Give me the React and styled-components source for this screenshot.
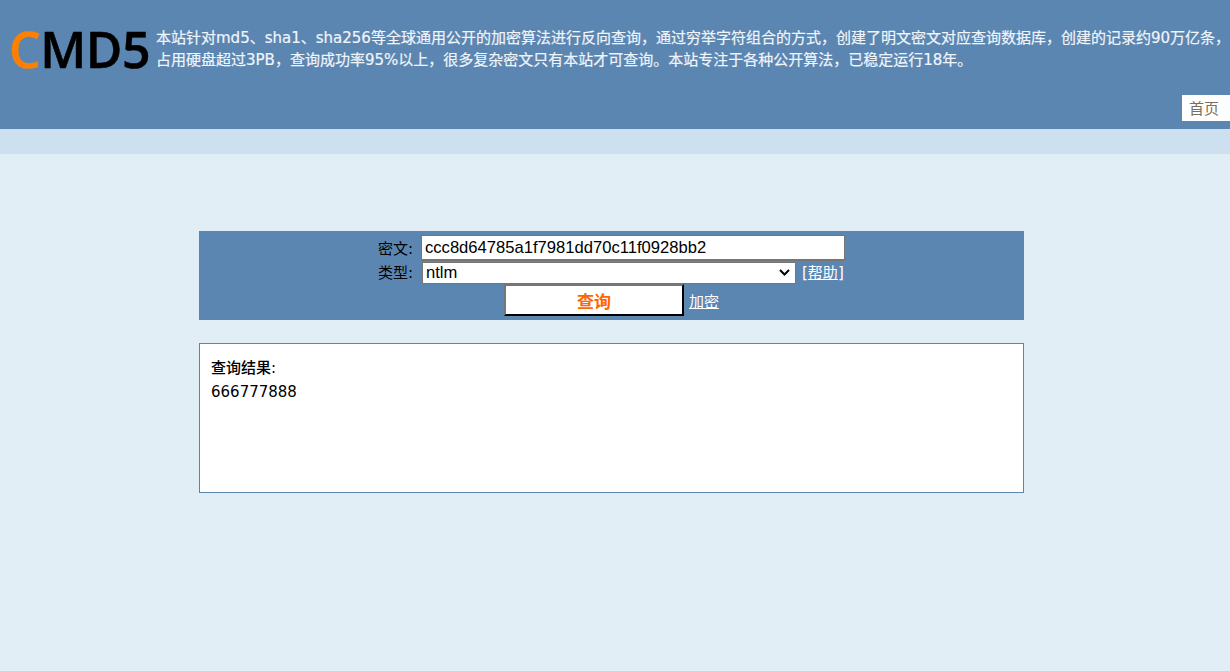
import React, { useState } from 'react'
import styled, { createGlobalStyle } from 'styled-components'

const GlobalStyle = createGlobalStyle`
  html, body {
    margin: 0;
    padding: 0;
    background: #e1eef6;
  }
  body {
    font-family: "DejaVu Sans", "Noto Sans CJK SC", sans-serif;
    font-size: 15px;
  }
`

const chevron = `url("data:image/svg+xml,%3Csvg xmlns='http://www.w3.org/2000/svg' width='11' height='7'%3E%3Cpath d='M1 1l4.5 4.5L10 1' fill='none' stroke='%23000' stroke-width='2'/%3E%3C/svg%3E")`

const Header = styled.header`
  height: 129px;
  background: #5c86b2;
  position: relative;
  display: flex;
  align-items: flex-start;
  box-sizing: border-box;
  padding: 27px 0 0 9px;
`

const Logo = styled.div`
  width: 147px;
  flex: none;
  font-family: "Open Sans", sans-serif;
  font-size: 50px;
  font-weight: 600;
  line-height: 44px;
  letter-spacing: -0.5px;
  color: #000;
  -webkit-text-stroke: 0.5px currentColor;
  white-space: nowrap;
`

const LogoC = styled.span`
  color: #ff8000;
`

const Intro = styled.p`
  margin: 0;
  font-size: 15px;
  line-height: 22px;
  color: #f0f5fa;
  -webkit-text-stroke: 0.2px #f0f5fa;
  white-space: nowrap;
`

const Nav = styled.a`
  position: absolute;
  right: 0;
  top: 95px;
  width: 48px;
  height: 26px;
  box-sizing: border-box;
  padding-left: 7px;
  background: #fff;
  color: #7a6e5c;
  font-size: 15px;
  line-height: 29px;
`

const SubBar = styled.div`
  height: 25px;
  background: #cce0ef;
`

const Main = styled.main`
  width: 825px;
  margin: 77px 0 0 199px;
`

const QueryForm = styled.form`
  height: 89px;
  box-sizing: border-box;
  padding-top: 4px;
  background: #5c86b2;
  display: flex;
  flex-direction: column;
  align-items: center;
`

const Row = styled.div`
  display: flex;
  align-items: center;
  height: ${p => p.$height}px;
`

const Label = styled.label`
  width: 43px;
  flex: none;
  padding-bottom: 2px;
  color: #000;
  font-size: 15px;
  white-space: nowrap;
`

const CipherInput = styled.input`
  width: 424px;
  height: 26px;
  box-sizing: border-box;
  margin: 0;
  padding: 0 3px;
  border: 1px solid #767676;
  border-bottom-width: 2px;
  background: #fff;
  color: #000;
  font-family: "Liberation Sans", sans-serif;
  font-size: 16.6px;
`

const TypeSelect = styled.select`
  appearance: none;
  width: 374px;
  height: 22px;
  box-sizing: border-box;
  margin: 0 6px 0 1px;
  padding: 0 3px;
  border: 1px solid #767676;
  background: #fff ${chevron} no-repeat right 5px center;
  color: #000;
  font-family: "Liberation Sans", sans-serif;
  font-size: 16.6px;
`

const Help = styled.span`
  width: 43px;
  padding-bottom: 2px;
  color: #fff;
  font-size: 15px;
  white-space: nowrap;
`

const LightLink = styled.a`
  color: #fff;
  font-size: 15px;
  text-decoration: underline;
  cursor: pointer;
`

const SubmitButton = styled.button`
  width: 180px;
  height: 32px;
  box-sizing: border-box;
  margin: 0 5px 0 0;
  padding: 0;
  border: 2px solid;
  border-color: #767676 #000 #000 #767676;
  background: #fff;
  color: #ff6600;
  font-family: "DejaVu Sans", "Noto Sans CJK SC", sans-serif;
  font-size: 17px;
  font-weight: bold;
`

const ResultBox = styled.section`
  height: 150px;
  box-sizing: border-box;
  margin-top: 23px;
  padding: 12px 11px 0;
  background: #fff;
  border: 1px solid #5c86b2;
  color: #000;
  font-size: 15px;
  line-height: 24px;
`

const ResultTitle = styled.div`
  font-weight: 500;
`

const App = () => {
  const [cipher, setCipher] = useState('ccc8d64785a1f7981dd70c11f0928bb2')
  const [type, setType] = useState('ntlm')

  return <>
    <GlobalStyle/>
    <Header>
      <Logo><LogoC>C</LogoC>MD5</Logo>
      <Intro>
        本站针对md5、sha1、sha256等全球通用公开的加密算法进行反向查询，通过穷举字符组合的方式，创建了明文密文对应查询数据库，创建的记录约90万亿条，<br/>
        占用硬盘超过3PB，查询成功率95%以上，很多复杂密文只有本站才可查询。本站专注于各种公开算法，已稳定运行18年。
      </Intro>
      <Nav>首页</Nav>
    </Header>
    <SubBar/>
    <Main>
      <QueryForm onSubmit={e => e.preventDefault()}>
        <Row $height={26}>
          <Label>密文:</Label>
          <CipherInput value={cipher} onChange={e => setCipher(e.target.value)}/>
        </Row>
        <Row $height={23}>
          <Label>类型:</Label>
          <TypeSelect value={type} onChange={e => setType(e.target.value)}>
            <option value="ntlm">ntlm</option>
            <option value="md5">md5</option>
            <option value="sha1">sha1</option>
          </TypeSelect>
          <Help>[<LightLink>帮助</LightLink>]</Help>
        </Row>
        <Row $height={32}>
          <SubmitButton type="submit">查询</SubmitButton>
          <LightLink>加密</LightLink>
        </Row>
      </QueryForm>
      <ResultBox>
        <ResultTitle>查询结果:</ResultTitle>
        666777888
      </ResultBox>
    </Main>
  </>
}

export default App
